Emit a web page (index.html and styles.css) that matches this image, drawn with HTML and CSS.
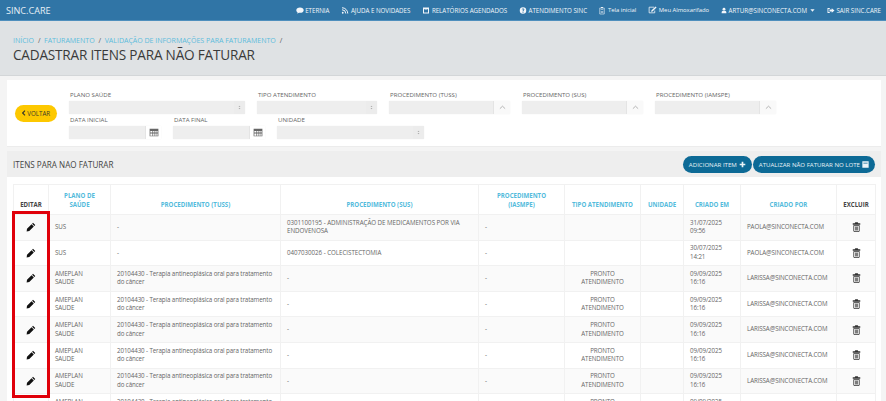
FILE: index.html
```html
<!DOCTYPE html>
<html lang="pt-BR">
<head>
<meta charset="utf-8">
<title>Cadastrar itens para não faturar</title>
<link rel="stylesheet" href="styles.css">
</head>
<body>
<svg class="defs" aria-hidden="true">
  <symbol id="pencil" viewBox="0 0 16 16"><path d="M11.2 1.200 14.800 4.800 13.400 6.200 9.800 2.600ZM8.900 3.500 12.500 7.100 5.200 14.400 1 15 1.600 10.800Z"/></symbol>
  <symbol id="trash" viewBox="0 0 14 16"><path fill-rule="evenodd" d="M5 .5h4l.8 1.500H13v2.200H1V2h3.200ZM2 5h10v9.500L10.800 16H3.200L2 14.500ZM3.300 6.200v8.500h7.400V6.200ZM4.600 7.300h1v6.300h-1ZM6.500 7.300h1v6.300h-1ZM8.400 7.300h1v6.300h-1Z"/></symbol>
  <symbol id="cal" viewBox="0 0 16 14"><path fill-rule="evenodd" d="M1 1h14v12H1ZM2.200 4.500V6h2.600V4.500ZM5.800 4.500V6h2V4.500ZM8.800 4.500V6h2V4.500ZM11.800 4.500V6h2V4.500ZM2.200 7v1.500h2.600V7ZM5.800 7v1.500h2V7ZM8.800 7v1.500h2V7ZM11.800 7v1.500h2V7ZM2.200 9.500V12h2.600V9.500ZM5.800 9.500V12h2V9.500ZM8.800 9.500V12h2V9.500ZM11.800 9.500V12h2V9.500Z"/></symbol>
  <symbol id="chev" viewBox="0 0 12 8"><path d="M1.500 6 6 1.800 10.500 6" fill="none" stroke="currentColor" stroke-width="1.200"/></symbol>
  <symbol id="spin" viewBox="0 0 6 10"><path d="M3 1.500 5 4H1ZM3 8.500 1 6H5Z"/></symbol>
</svg>

<nav class="topbar">
  <span class="brand">SINC.CARE</span>
  <ul class="topnav">
    <li class="topnav-item"><svg class="nav-ico" viewBox="0 0 16 14"><path d="M8 1C3.800 1 .6 3.300.6 6.300c0 1.700 1 3.100 2.600 4.100-.2 1.100-.8 2-1.600 2.800 1.700-.2 3.200-.8 4.400-1.800.6.100 1.300.2 2 .2 4.200 0 7.400-2.300 7.400-5.300S12.200 1 8 1Z"/></svg>ETERNIA</li>
    <li class="topnav-item"><svg class="nav-ico" viewBox="0 0 14 14"><circle cx="2.500" cy="11.500" r="1.800"/><path d="M1 5.500a7.500 7.500 0 0 1 7.500 7.500M1 1.500A11.500 11.500 0 0 1 12.500 13" fill="none" stroke="currentColor" stroke-width="2"/></svg>AJUDA E NOVIDADES</li>
    <li class="topnav-item"><svg class="nav-ico" viewBox="0 0 14 14"><path fill-rule="evenodd" d="M1 1h12v12H1ZM3 4v7h8V4Z"/><path d="M4 5h6v1H4Z"/></svg>RELATÓRIOS AGENDADOS</li>
    <li class="topnav-item"><svg class="nav-ico" viewBox="0 0 14 14"><path fill-rule="evenodd" d="M7 .5a6.500 6.500 0 1 0 0 13 6.500 6.500 0 0 0 0-13ZM6 9.500h2v2H6ZM4.500 5C4.700 3.500 5.800 2.800 7.100 2.800 8.600 2.800 9.700 3.700 9.700 5c0 1.800-1.900 1.900-1.900 3.500H6.200c0-2.300 1.700-2.400 1.700-3.400C7.900 4.600 7.600 4.300 7 4.300 6.500 4.300 6.200 4.600 6.100 5.200Z"/></svg>ATENDIMENTO SINC</li>
    <li class="topnav-item topnav-mixed"><svg class="nav-ico nav-ico-clip" viewBox="0 0 12 16"><path d="M4 1h4v2H4Z"/><path d="M1.500 3h9v12h-9Z" fill="none" stroke="currentColor" stroke-width="1.200"/><path d="M3.500 6h5v1.200h-5ZM3.500 9h5v1.200h-5ZM3.500 12h5v1h-5Z"/></svg>Tela inicial</li>
    <li class="topnav-item topnav-mixed"><svg class="nav-ico nav-ico-edit" viewBox="0 0 16 14"><path d="M11 2H2v10h10V8" fill="none" stroke="currentColor" stroke-width="1.400"/><path d="M13.500.8 15.200 2.500 8 9.700 5.500 10.200 6 7.700Z"/></svg>Meu Almoxarifado</li>
    <li class="topnav-item"><svg class="nav-ico nav-ico-user" viewBox="0 0 14 14"><circle cx="7" cy="4" r="3.300"/><path d="M1.500 13.500V11C1.500 8.800 3 7.500 4.500 7.300 5.200 7.800 6 8.100 7 8.100S8.800 7.800 9.500 7.300C11 7.500 12.500 8.800 12.500 11v2.500Z"/></svg>ARTUR@SINCONECTA.COM<svg class="caret" viewBox="0 0 8 5"><path d="M.5.500h7L4 4.500Z"/></svg></li>
    <li class="topnav-item"><svg class="nav-ico" viewBox="0 0 16 14"><path d="M1 2h4.500v1.800H2.800v6.400h2.700V12H1Z"/><path d="M9.500 2.500 15 7l-5.500 4.500V9H5V5h4.500Z"/></svg>SAIR SINC.CARE</li>
  </ul>
</nav>

<header class="page-head">
  <ol class="crumbs">
    <li><a>INÍCIO</a></li>
    <li><a>FATURAMENTO</a></li>
    <li><a>VALIDAÇÃO DE INFORMAÇÕES PARA FATURAMENTO</a></li>
  </ol>
  <h1 class="page-title">CADASTRAR ITENS PARA NÃO FATURAR</h1>
</header>

<main class="content">
  <section class="filters">
    <button class="btn-back"><svg class="back-ico" viewBox="0 0 6 8"><path d="M4.500.5 1 4l3.500 3.500" fill="none" stroke="currentColor" stroke-width="1.800"/></svg>VOLTAR</button>
    <div class="filter-rows">
      <div class="filter-row">
        <div class="field w-plano"><label>PLANO SAÚDE</label><div class="control"><span class="fill"></span><span class="addon addon-spin"><svg class="ico-spin"><use href="#spin"/></svg></span></div></div>
        <div class="field w-tipo"><label>TIPO ATENDIMENTO</label><div class="control"><span class="fill"></span><span class="addon addon-spin"><svg class="ico-spin"><use href="#spin"/></svg></span></div></div>
        <div class="field w-proc"><label>PROCEDIMENTO (TUSS)</label><div class="control"><span class="fill"></span><span class="addon"><svg class="ico-chev"><use href="#chev"/></svg></span></div></div>
        <div class="field w-proc"><label>PROCEDIMENTO (SUS)</label><div class="control"><span class="fill"></span><span class="addon"><svg class="ico-chev"><use href="#chev"/></svg></span></div></div>
        <div class="field w-proc"><label>PROCEDIMENTO (IAMSPE)</label><div class="control"><span class="fill"></span><span class="addon"><svg class="ico-chev"><use href="#chev"/></svg></span></div></div>
      </div>
      <div class="filter-row">
        <div class="field w-data"><label>DATA INICIAL</label><div class="control"><span class="fill"></span><span class="addon addon-white"><svg class="ico-cal"><use href="#cal"/></svg></span></div></div>
        <div class="field w-data"><label>DATA FINAL</label><div class="control"><span class="fill"></span><span class="addon addon-white"><svg class="ico-cal"><use href="#cal"/></svg></span></div></div>
        <div class="field w-unid"><label>UNIDADE</label><div class="control"><span class="fill"></span><span class="addon addon-spin"><svg class="ico-spin"><use href="#spin"/></svg></span></div></div>
      </div>
    </div>
  </section>

  <section class="list">
    <div class="list-head">
      <h2 class="list-title">ITENS PARA NAO FATURAR</h2>
      <div class="list-actions">
        <button class="btn-teal">ADICIONAR ITEM<svg class="btn-ico" viewBox="0 0 10 10"><path d="M3.800 1h2.400v2.800H9v2.400H6.200V9H3.800V6.200H1V3.800h2.800Z"/></svg></button>
        <button class="btn-teal">ATUALIZAR NÃO FATURAR NO LOTE<svg class="btn-ico" viewBox="0 0 10 10"><path fill-rule="evenodd" d="M.5.500h9v9h-9ZM2 2.500v1h6v-1Z"/></svg></button>
      </div>
    </div>
    <div class="list-body">
      <table class="grid">
        <colgroup><col class="c1"><col class="c2"><col class="c3"><col class="c4"><col class="c5"><col class="c6"><col class="c7"><col class="c8"><col class="c9"><col class="c10"></colgroup>
        <thead>
          <tr>
            <th class="th-dark">EDITAR</th><th>PLANO DE<br>SAÚDE</th><th>PROCEDIMENTO (TUSS)</th><th>PROCEDIMENTO (SUS)</th><th>PROCEDIMENTO<br>(IASMPE)</th><th>TIPO ATENDIMENTO</th><th>UNIDADE</th><th>CRIADO EM</th><th>CRIADO POR</th><th class="th-dark">EXCLUIR</th>
          </tr>
        </thead>
        <tbody>
          <tr><td class="ic"><svg class="ico-pencil"><use href="#pencil"/></svg></td><td>SUS</td><td>-</td><td>0301100195 - ADMINISTRAÇÃO DE MEDICAMENTOS POR VIA ENDOVENOSA</td><td>-</td><td></td><td></td><td>31/07/2025<br>09:56</td><td>PAOLA@SINCONECTA.COM</td><td class="ic"><svg class="ico-trash"><use href="#trash"/></svg></td></tr>
          <tr><td class="ic"><svg class="ico-pencil"><use href="#pencil"/></svg></td><td>SUS</td><td>-</td><td>0407030026 - COLECISTECTOMIA</td><td>-</td><td></td><td></td><td>30/07/2025<br>14:21</td><td>PAOLA@SINCONECTA.COM</td><td class="ic"><svg class="ico-trash"><use href="#trash"/></svg></td></tr>
          <tr><td class="ic"><svg class="ico-pencil"><use href="#pencil"/></svg></td><td>AMEPLAN<br>SAUDE</td><td>20104430 - Terapia antineoplásica oral para tratamento do câncer</td><td>-</td><td>-</td><td class="tc">PRONTO ATENDIMENTO</td><td></td><td>09/09/2025<br>16:16</td><td>LARISSA@SINCONECTA.COM</td><td class="ic"><svg class="ico-trash"><use href="#trash"/></svg></td></tr>
          <tr><td class="ic"><svg class="ico-pencil"><use href="#pencil"/></svg></td><td>AMEPLAN<br>SAUDE</td><td>20104430 - Terapia antineoplásica oral para tratamento do câncer</td><td>-</td><td>-</td><td class="tc">PRONTO ATENDIMENTO</td><td></td><td>09/09/2025<br>16:16</td><td>LARISSA@SINCONECTA.COM</td><td class="ic"><svg class="ico-trash"><use href="#trash"/></svg></td></tr>
          <tr><td class="ic"><svg class="ico-pencil"><use href="#pencil"/></svg></td><td>AMEPLAN<br>SAUDE</td><td>20104430 - Terapia antineoplásica oral para tratamento do câncer</td><td>-</td><td>-</td><td class="tc">PRONTO ATENDIMENTO</td><td></td><td>09/09/2025<br>16:16</td><td>LARISSA@SINCONECTA.COM</td><td class="ic"><svg class="ico-trash"><use href="#trash"/></svg></td></tr>
          <tr><td class="ic"><svg class="ico-pencil"><use href="#pencil"/></svg></td><td>AMEPLAN<br>SAUDE</td><td>20104430 - Terapia antineoplásica oral para tratamento do câncer</td><td>-</td><td>-</td><td class="tc">PRONTO ATENDIMENTO</td><td></td><td>09/09/2025<br>16:16</td><td>LARISSA@SINCONECTA.COM</td><td class="ic"><svg class="ico-trash"><use href="#trash"/></svg></td></tr>
          <tr><td class="ic"><svg class="ico-pencil"><use href="#pencil"/></svg></td><td>AMEPLAN<br>SAUDE</td><td>20104430 - Terapia antineoplásica oral para tratamento do câncer</td><td>-</td><td>-</td><td class="tc">PRONTO ATENDIMENTO</td><td></td><td>09/09/2025<br>16:16</td><td>LARISSA@SINCONECTA.COM</td><td class="ic"><svg class="ico-trash"><use href="#trash"/></svg></td></tr>
          <tr><td class="ic"></td><td>AMEPLAN<br>SAUDE</td><td>20104430 - Terapia antineoplásica oral para tratamento do câncer</td><td>-</td><td>-</td><td class="tc">PRONTO ATENDIMENTO</td><td></td><td>09/09/2025<br>16:16</td><td>LARISSA@SINCONECTA.COM</td><td class="ic"></td></tr>
        </tbody>
      </table>
    </div>
  </section>
</main>

<div class="highlight"></div>
</body>
</html>
```

FILE: styles.css
```css
* { box-sizing: border-box; }
html, body { height: 100%; }
body {
  margin: 0;
  height: 401px;
  overflow: hidden;
  position: relative;
  background: #f4f4f4;
  color: #555;
  font-family: "Open Sans", "Noto Sans", sans-serif;
  font-size: 7px;
}
.defs { display: none; }

.topbar {
  height: 21px;
  background: #3075a6;
  border-bottom: 1px solid #4f8fbd;
  color: #f2f6fa;
  display: flex;
  align-items: center;
  justify-content: space-between;
  padding: 0 5px 0 6px;
}
.brand { font-size: 9.1px; color: #e8f0f6; }
.topnav { list-style: none; margin: 0; padding: 0; display: flex; gap: 12px; }
.topnav-item { display: flex; align-items: center; font-size: 6.2px; letter-spacing: -.02px; white-space: nowrap; }
.topnav-mixed { font-size: 5.9px; }
.nav-ico { width: 8px; height: 7px; margin-right: 1.500px; fill: currentColor; }
.nav-ico-clip { width: 6px; height: 9px; margin-right: 3px; }
.nav-ico-edit { width: 9px; height: 8px; }
.nav-ico-user { width: 6px; }
.caret { width: 5px; height: 3px; margin-left: 3px; fill: currentColor; }

.page-head {
  height: 55px;
  background: #dfe2e4;
  border-bottom: 1px solid #d3d6d8;
  padding: 14px 13px 0;
}
.crumbs { list-style: none; margin: 0; padding: 0; display: flex; font-size: 7px; line-height: 11px; }
.crumbs li::after { content: "/"; color: #555; margin: 0 3.500px 0 4px; }
.crumbs a { color: #5cbcdc; }
.page-title { margin: 0; font-size: 13.6px; letter-spacing: -.2px; font-weight: 400; line-height: 18px; color: #3a3a3a; }

.content { padding: 4px 5px 0 7px; }

.filters {
  height: 67px;
  background: #fff;
  display: flex;
  align-items: center;
  border-bottom: 1px solid #ececec;
}
.btn-back {
  width: 42px; height: 17px; margin: 0 0 0 8px; padding: 0;
  border: 0; border-radius: 9px;
  background: #fdc800; color: #3a3a2a;
  font: 400 6.2px "Open Sans", sans-serif;
  display: flex; align-items: center; justify-content: center;
}
.back-ico { width: 4px; height: 6px; margin-right: 1.500px; }
.filter-rows { margin: 3px 0 0 12px; display: flex; flex-direction: column; gap: 1px; }
.filter-row { display: flex; gap: 12px; }
.field label { display: block; font-size: 6.1px; line-height: 10px; color: #666; white-space: nowrap; margin-bottom: 1px; padding-left: 1px; }
.control { height: 13px; display: flex; background: #eee; border-radius: 1px; box-shadow: 0 0 1px #ddd; }
.fill { flex: 1; }
.addon { width: 17px; display: flex; align-items: center; justify-content: center; background: #f9f9f9; border-left: 1px solid #e4e4e4; color: #999; }
.addon-spin { width: 11px; background: #ececec; border-left: 0; }
.addon-white { width: 16px; background: #fff; color: #555; }
.w-plano { width: 176px; }
.w-tipo { width: 120px; }
.w-proc { width: 121px; }
.w-data { width: 92px; }
.w-unid { width: 147px; }
.ico-spin { width: 3px; height: 5px; fill: #aaa; }
.ico-chev { width: 7px; height: 5px; color: #999; }
.ico-cal { width: 10px; height: 9px; fill: #666; }

.list { margin-top: 4px; background: #fff; }
.list-head {
  height: 26px;
  background: #eee;
  display: flex;
  align-items: center;
  justify-content: space-between;
  padding: 0 6px 0 6px;
}
.list-title { margin: 0; font-size: 8.100px; font-weight: 400; color: #444; }
.list-actions { display: flex; gap: 1px; }
.btn-teal {
  height: 17px; padding: 0 6px; border: 0; border-radius: 9px;
  background: #0d6a96; color: #eaf3f7;
  font: 400 6.100px "Open Sans", sans-serif;
  display: flex; align-items: center; white-space: nowrap;
}
.btn-ico { width: 7px; height: 7px; margin-left: 2px; fill: currentColor; }
.list-body { padding: 7px 6px 0; }

.grid { width: 862px; table-layout: fixed; border-collapse: collapse; }
.c1 { width: 35px; } .c2 { width: 62px; } .c3 { width: 170px; } .c4 { width: 198px; } .c5 { width: 86px; }
.c6 { width: 76px; } .c7 { width: 43px; } .c8 { width: 57px; } .c9 { width: 96px; } .c10 { width: 39px; }
.grid th, .grid td { border: 1px solid #f1f1f1; }
.grid th {
  height: 30px; padding: 0 1px 5px;
  font-size: 6.100px; line-height: 8.500px; font-weight: 700;
  color: #53bbdc; text-align: center; vertical-align: bottom;
}
.grid .th-dark { color: #444; }
.grid td { height: 25.600px; padding: 0 6px; font-size: 6.200px; letter-spacing: -.1px; line-height: 8.500px; color: #666; }
.grid td:nth-child(4) { letter-spacing: -.03px; }
.grid tbody tr:nth-child(odd) { background: #fafafa; }
.grid .ic { padding: 0; text-align: center; }
.grid .tc { text-align: center; }
.ico-pencil { display: block; margin: 0 auto; width: 10px; height: 10px; fill: #111; }
.ico-trash { display: block; margin: 0 auto; width: 9px; height: 10px; fill: #333; }

.highlight {
  position: absolute;
  left: 12px; top: 211px;
  width: 38px; height: 187px;
  border: 3px solid #e0000a;
}
```
